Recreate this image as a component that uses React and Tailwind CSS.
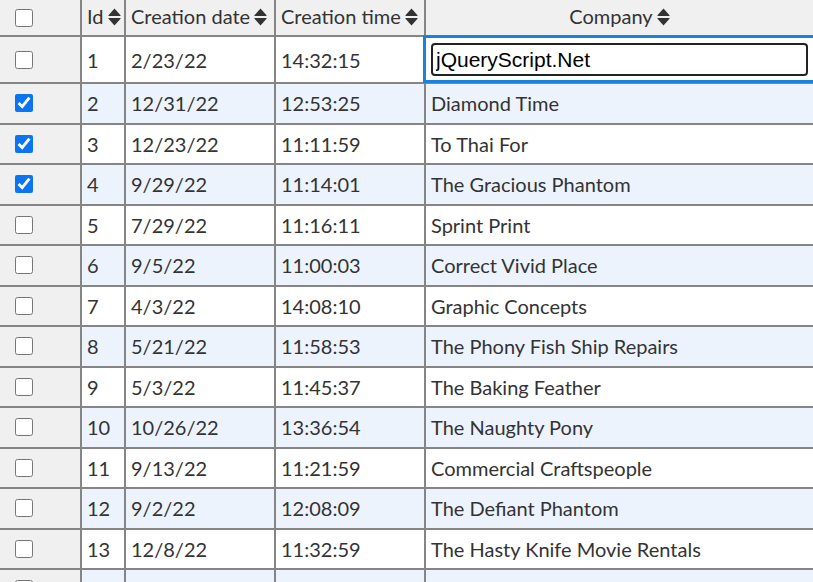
import React from "react";

const rows = [
  [1, "2/23/22", "14:32:15", "jQueryScript.Net", false],
  [2, "12/31/22", "12:53:25", "Diamond Time", true],
  [3, "12/23/22", "11:11:59", "To Thai For", true],
  [4, "9/29/22", "11:14:01", "The Gracious Phantom", true],
  [5, "7/29/22", "11:16:11", "Sprint Print", false],
  [6, "9/5/22", "11:00:03", "Correct Vivid Place", false],
  [7, "4/3/22", "14:08:10", "Graphic Concepts", false],
  [8, "5/21/22", "11:58:53", "The Phony Fish Ship Repairs", false],
  [9, "5/3/22", "11:45:37", "The Baking Feather", false],
  [10, "10/26/22", "13:36:54", "The Naughty Pony", false],
  [11, "9/13/22", "11:21:59", "Commercial Craftspeople", false],
  [12, "9/2/22", "12:08:09", "The Defiant Phantom", false],
  [13, "12/8/22", "11:32:59", "The Hasty Knife Movie Rentals", false],
  // partly visible row below the fold
  [null, "", "", "", false],
];

const SortIcon = () => (
  <svg width="13" height="18" viewBox="0 0 13 18" className="ml-[4px] mt-[2px] shrink-0">
    <path d="M6.5 0.5 L12.5 7.2 Q13 8 12 8 L1 8 Q0 8 0.5 7.2 Z" fill="#333" />
    <path d="M6.5 17.5 L12.5 10.8 Q13 10 12 10 L1 10 Q0 10 0.5 10.8 Z" fill="#333" />
  </svg>
);

const Check = ({ checked }) => (
  <input
    type="checkbox"
    defaultChecked={checked}
    className="w-[18px] h-[18px] m-0 ml-[15px] accent-[#0b74f0]"
  />
);

const cell = "flex items-center px-[5px] border-r-2 border-b-2 border-[#858585] shrink-0 whitespace-nowrap";

export default function App() {
  return (
    <div
      className="w-[813px] h-[582px] overflow-hidden bg-white text-[#333] text-[20px]"
      style={{ fontFamily: "Lato, 'Open Sans', sans-serif" }}
    >
      <div className="w-[840px]">
        {/* Header */}
        <div className="flex h-[37px] bg-[#f0f0f0]">
          <div className="flex items-center w-[82px] border-r-2 border-b-2 border-[#858585] shrink-0">
            <Check checked={false} />
          </div>
          <div className={`${cell} w-[44px] pb-[3px]`}>
            Id
            <SortIcon />
          </div>
          <div className={`${cell} w-[150px] pb-[3px]`}>
            Creation date
            <SortIcon />
          </div>
          <div className={`${cell} w-[150px] pb-[3px]`}>
            Creation time
            <SortIcon />
          </div>
          <div className="flex items-center justify-center flex-1 border-b-2 border-[#858585] pr-[27px] pb-[3px]">
            Company
            <SortIcon />
          </div>
        </div>

        {/* Body */}
        {rows.map(([id, date, time, company, checked], i) => {
          const even = i % 2 === 1;
          const first = i === 0;
          return (
            <div
              key={i}
              className={`flex ${first ? "h-[47px]" : "h-[40.5px]"} ${even ? "bg-[#edf3fd]" : "bg-white"}`}
            >
              <div className="flex items-center w-[82px] bg-[#f0f0f0] border-r-2 border-b-2 border-[#858585] shrink-0">
                <Check checked={checked} />
              </div>
              <div className={`${cell} w-[44px]`}>{id}</div>
              <div className={`${cell} w-[150px]`}>{date}</div>
              <div className={`${cell} w-[150px]`}>{time}</div>
              <div className="relative flex items-center flex-1 px-[5px] border-b-2 border-[#858585]">
                {first ? (
                  <>
                    <div className="absolute -top-[2px] -left-[3px] right-0 -bottom-[1px] border-[3px] border-r-0 border-[#1a82d8] pointer-events-none" />
                    <input
                      defaultValue="jQueryScript.Net"
                      className="w-[377px] h-[33px] border-2 border-[#222] rounded-[4px] px-[3px] text-[21px] text-black outline-none"
                      style={{ fontFamily: "'Liberation Sans', Arial, sans-serif" }}
                    />
                  </>
                ) : (
                  company
                )}
              </div>
            </div>
          );
        })}
      </div>
    </div>
  );
}
